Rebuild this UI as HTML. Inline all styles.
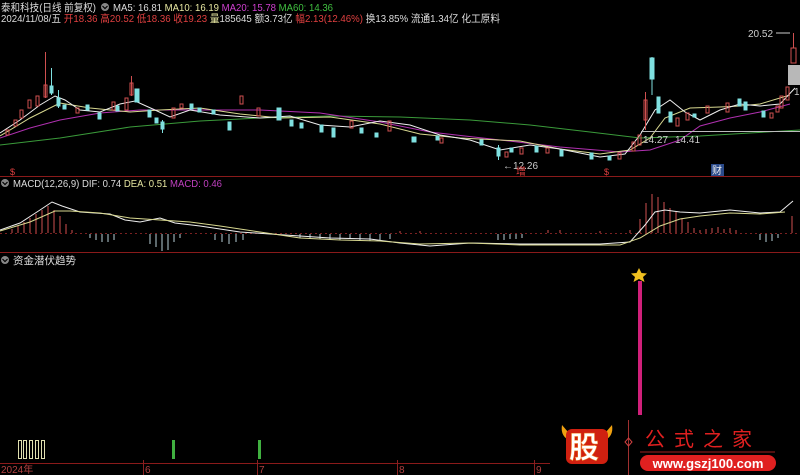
<!DOCTYPE html>
<html><head><meta charset="utf-8"><style>
html,body{margin:0;padding:0;background:#000;width:800px;height:475px;overflow:hidden}
svg{display:block}
text{font-family:"Liberation Sans","Noto Sans CJK SC",sans-serif}
</style></head><body>
<svg width="800" height="475" viewBox="0 0 800 475" xmlns="http://www.w3.org/2000/svg">
<rect width="800" height="475" fill="#000"/>
<!-- header -->
<text x="1" y="11" font-size="10.5" fill="#ddd" textLength="95" lengthAdjust="spacingAndGlyphs">泰和科技(日线 前复权)</text>
<circle cx="105" cy="7" r="4" fill="#888"/><path d="M102.5 6 L105 8.5 L107.5 6" stroke="#000" stroke-width="1.2" fill="none"/>
<text x="113" y="11" font-size="10.5" textLength="220" lengthAdjust="spacingAndGlyphs"><tspan fill="#ddd">MA5: 16.81 </tspan><tspan fill="#e6e6a0">MA10: 16.19 </tspan><tspan fill="#d040d0">MA20: 15.78 </tspan><tspan fill="#40c040">MA60: 14.36</tspan></text>
<text x="1" y="22" font-size="10.5" textLength="499" lengthAdjust="spacingAndGlyphs"><tspan fill="#ddd">2024/11/08/五 </tspan><tspan fill="#e04040">开18.36 高20.52 低18.36 收19.23 </tspan><tspan fill="#e6e6a0">量</tspan><tspan fill="#ddd">185645 额3.73亿 </tspan><tspan fill="#e04040">幅2.13(12.46%) </tspan><tspan fill="#ddd">换13.85% 流通1.34亿 化工原料</tspan></text>

<!-- separators -->
<line x1="0" y1="176.5" x2="800" y2="176.5" stroke="#8a1a1a"/>
<line x1="0" y1="252.5" x2="800" y2="252.5" stroke="#8a1a1a"/>
<line x1="0" y1="463.5" x2="800" y2="463.5" stroke="#8a1a1a"/>

<!-- price MAs -->
<polyline fill="none" stroke="#3a9a3a" stroke-width="1" points="0,145 60,138 130,127 200,121 260,118 330,116 400,117 470,120 530,125 590,132 640,138 700,136 750,133 800,130"/>
<polyline fill="none" stroke="#b030b0" stroke-width="1" points="0,138 30,128 60,120 100,113 140,110 200,110 260,110 320,113 380,122 430,132 500,140 560,147 620,152 650,150 680,140 700,126 730,118 760,112 790,104"/>
<polyline fill="none" stroke="#d8d890" stroke-width="1" points="0,136 30,118 60,103 90,108 130,112 160,110 200,108 240,114 280,118 330,117 380,124 420,134 460,138 520,141 560,149 600,154 630,150 650,138 665,118 690,108 720,107 740,106 760,104 790,95"/>
<polyline fill="none" stroke="#eee" stroke-width="1" points="0,133 20,120 40,105 55,96 65,100 80,110 100,112 120,104 135,101 155,110 170,117 190,110 220,115 260,118 290,116 320,125 350,127 380,121 410,125 440,135 470,140 500,150 530,145 560,149 600,157 625,154 640,135 655,110 670,100 685,112 700,120 720,110 740,104 760,106 780,104 795,88"/>

<!-- candles -->
<g fill="#7fe0e0" stroke="#7fe0e0">
<rect x="50" y="86" width="3" height="7"/><line x1="51.5" y1="68" x2="51.5" y2="95"/>
<rect x="57" y="98" width="3" height="8"/><line x1="58.5" y1="90" x2="58.5" y2="108"/>
<rect x="63" y="105" width="3" height="4"/>
<rect x="86" y="105" width="3" height="5"/>
<rect x="98" y="113" width="3" height="6"/>
<rect x="116" y="106" width="3" height="5"/>
<rect x="135" y="89" width="4" height="13"/>
<rect x="148" y="110" width="3" height="7"/>
<rect x="155" y="118" width="3" height="5"/>
<rect x="161" y="122" width="3" height="7"/><line x1="162.5" y1="120" x2="162.5" y2="133"/>
<rect x="190" y="104" width="3" height="5"/>
<rect x="198" y="108" width="3" height="4"/>
<rect x="212" y="110" width="3" height="4"/>
<rect x="228" y="122" width="3" height="8"/>
<rect x="277" y="108" width="4" height="12"/>
<rect x="290" y="120" width="3" height="6"/>
<rect x="300" y="123" width="3" height="5"/>
<rect x="320" y="125" width="3" height="7"/>
<rect x="332" y="128" width="3" height="9"/>
<rect x="360" y="128" width="3" height="5"/>
<rect x="375" y="133" width="3" height="4"/>
<rect x="412" y="137" width="4" height="5"/>
<rect x="436" y="136" width="3" height="4"/>
<rect x="480" y="140" width="3" height="5"/>
<rect x="497" y="148" width="3" height="8"/><line x1="498.5" y1="145" x2="498.5" y2="160"/>
<rect x="510" y="148" width="3" height="4"/>
<rect x="535" y="146" width="3" height="6"/>
<rect x="560" y="150" width="3" height="6"/>
<rect x="590" y="153" width="3" height="6"/>
<rect x="608" y="156" width="3" height="4"/>
<rect x="650" y="58" width="4" height="21"/><line x1="652" y1="57" x2="652" y2="95"/>
<rect x="657" y="97" width="3" height="16"/>
<rect x="669" y="112" width="3" height="10"/>
<rect x="693" y="114" width="3" height="3"/>
<rect x="738" y="99" width="3" height="7"/>
<rect x="744" y="102" width="3" height="8"/>
<rect x="762" y="111" width="3" height="6"/>
</g>
<g fill="none" stroke="#d05050">
<rect x="44" y="85" width="3" height="12"/><line x1="45.5" y1="52" x2="45.5" y2="98"/>
<rect x="36" y="96" width="3" height="10"/>
<rect x="28" y="100" width="3" height="8"/>
<rect x="20" y="110" width="3" height="8"/>
<rect x="14" y="120" width="3" height="6"/>
<rect x="6" y="130" width="3" height="5"/>
<rect x="76" y="108" width="3" height="5"/>
<rect x="112" y="102" width="3" height="8"/>
<rect x="125" y="98" width="3" height="12"/>
<rect x="130" y="83" width="3" height="12"/><line x1="131.5" y1="76" x2="131.5" y2="96"/>
<rect x="172" y="108" width="3" height="10"/>
<rect x="180" y="104" width="3" height="4"/>
<rect x="240" y="96" width="3" height="8"/>
<rect x="257" y="108" width="3" height="8"/>
<rect x="350" y="121" width="3" height="7"/>
<rect x="388" y="121" width="3" height="10"/>
<rect x="440" y="138" width="3" height="5"/>
<rect x="505" y="152" width="3" height="5"/>
<rect x="520" y="148" width="3" height="6"/>
<rect x="546" y="148" width="3" height="5"/>
<rect x="618" y="153" width="3" height="6"/>
<rect x="632" y="142" width="3" height="9"/>
<rect x="638" y="135" width="3" height="10"/>
<rect x="644" y="100" width="3" height="20"/><line x1="645.5" y1="92" x2="645.5" y2="130"/>
<rect x="676" y="118" width="3" height="8"/>
<rect x="686" y="113" width="3" height="7"/>
<rect x="706" y="106" width="3" height="7"/>
<rect x="726" y="103" width="3" height="9"/>
<rect x="770" y="113" width="3" height="5"/>
<rect x="776" y="106" width="3" height="6"/>
<rect x="780" y="96" width="3" height="12"/>
<rect x="786" y="87" width="3" height="13"/>
<rect x="791" y="48" width="5" height="15"/><line x1="793.5" y1="33" x2="793.5" y2="48"/>
</g>
<rect x="788" y="65" width="12" height="20" fill="#b8b8b8"/>
<line x1="641" y1="131.5" x2="800" y2="131.5" stroke="#bbb"/>
<text x="748" y="37" font-size="10" fill="#ccc">20.52</text><line x1="776" y1="33" x2="790" y2="33" stroke="#ccc"/>
<text x="794" y="95" font-size="10" fill="#ccc">17</text>
<text x="643" y="143" font-size="10" fill="#ccc">14.27</text><text x="675" y="143" font-size="10" fill="#ccc">14.41</text>
<text x="503" y="169" font-size="10" fill="#ccc">←12.26</text>
<text x="516" y="175" font-size="10" fill="#e04040">增</text>
<text x="604" y="175" font-size="9" fill="#e04040">$</text>
<text x="10" y="175" font-size="9" fill="#e04040">$</text>
<rect x="711" y="164" width="13" height="12" fill="#2a4a8a"/><text x="712" y="174" font-size="10" fill="#eee">财</text>

<!-- MACD -->
<circle cx="5" cy="183" r="4" fill="#888"/><path d="M2.5 182 L5 184.5 L7.5 182" stroke="#000" stroke-width="1.2" fill="none"/>
<text x="13" y="187" font-size="10.5" textLength="209" lengthAdjust="spacingAndGlyphs"><tspan fill="#ddd">MACD(12,26,9) DIF: 0.74 </tspan><tspan fill="#e6e6a0">DEA: 0.51 </tspan><tspan fill="#c040c0">MACD: 0.46</tspan></text>
<g stroke="#d05050">
<line x1="12" y1="233" x2="12" y2="229"/><line x1="18" y1="233" x2="18" y2="226"/><line x1="24" y1="233" x2="24" y2="222"/><line x1="30" y1="233" x2="30" y2="218"/><line x1="36" y1="233" x2="36" y2="214"/><line x1="42" y1="233" x2="42" y2="210"/><line x1="48" y1="233" x2="48" y2="206"/><line x1="54" y1="233" x2="54" y2="210"/><line x1="60" y1="233" x2="60" y2="216"/><line x1="66" y1="233" x2="66" y2="224"/><line x1="72" y1="233" x2="72" y2="230"/>
<line x1="640" y1="233" x2="640" y2="219"/><line x1="646" y1="233" x2="646" y2="203"/><line x1="652" y1="233" x2="652" y2="194"/><line x1="658" y1="233" x2="658" y2="197"/><line x1="664" y1="233" x2="664" y2="202"/><line x1="670" y1="233" x2="670" y2="208"/><line x1="676" y1="233" x2="676" y2="212"/><line x1="682" y1="233" x2="682" y2="218"/><line x1="688" y1="233" x2="688" y2="222"/><line x1="694" y1="233" x2="694" y2="228"/><line x1="700" y1="233" x2="700" y2="230"/><line x1="706" y1="233" x2="706" y2="229"/><line x1="712" y1="233" x2="712" y2="228"/><line x1="718" y1="233" x2="718" y2="227"/><line x1="724" y1="233" x2="724" y2="229"/><line x1="730" y1="233" x2="730" y2="228"/><line x1="736" y1="233" x2="736" y2="230"/><line x1="792" y1="233" x2="792" y2="216"/>
<line x1="400" y1="233" x2="400" y2="231"/><line x1="420" y1="233" x2="420" y2="231"/><line x1="548" y1="233" x2="548" y2="230"/><line x1="560" y1="233" x2="560" y2="230"/><line x1="600" y1="233" x2="600" y2="231"/><line x1="630" y1="233" x2="630" y2="230"/>
</g>
<line x1="0" y1="233.5" x2="800" y2="233.5" stroke="#7a2020" stroke-dasharray="2,3"/>
<g stroke="#b8d0d8">
<line x1="90" y1="234" x2="90" y2="238"/><line x1="96" y1="234" x2="96" y2="240"/><line x1="102" y1="234" x2="102" y2="242"/><line x1="108" y1="234" x2="108" y2="242"/><line x1="114" y1="234" x2="114" y2="240"/><line x1="150" y1="234" x2="150" y2="244"/><line x1="156" y1="234" x2="156" y2="247"/><line x1="162" y1="234" x2="162" y2="251"/><line x1="168" y1="234" x2="168" y2="250"/><line x1="174" y1="234" x2="174" y2="242"/><line x1="180" y1="234" x2="180" y2="238"/><line x1="215" y1="234" x2="215" y2="240"/><line x1="222" y1="234" x2="222" y2="242"/><line x1="229" y1="234" x2="229" y2="244"/><line x1="236" y1="234" x2="236" y2="242"/><line x1="243" y1="234" x2="243" y2="240"/>
<line x1="300" y1="234" x2="300" y2="238"/><line x1="310" y1="234" x2="310" y2="239"/><line x1="320" y1="234" x2="320" y2="239"/><line x1="330" y1="234" x2="330" y2="240"/><line x1="340" y1="234" x2="340" y2="240"/><line x1="350" y1="234" x2="350" y2="239"/><line x1="360" y1="234" x2="360" y2="240"/><line x1="370" y1="234" x2="370" y2="241"/><line x1="380" y1="234" x2="380" y2="240"/><line x1="390" y1="234" x2="390" y2="239"/>
<line x1="498" y1="234" x2="498" y2="240"/><line x1="504" y1="234" x2="504" y2="240"/><line x1="510" y1="234" x2="510" y2="239"/><line x1="516" y1="234" x2="516" y2="239"/><line x1="522" y1="234" x2="522" y2="238"/>
<line x1="760" y1="234" x2="760" y2="240"/><line x1="766" y1="234" x2="766" y2="242"/><line x1="772" y1="234" x2="772" y2="241"/><line x1="778" y1="234" x2="778" y2="238"/>
</g>
<polyline fill="none" stroke="#eee" points="0,230 20,223 40,210 52,202 62,206 80,212 110,214 125,220 140,222 160,218 175,223 200,226 240,232 270,234 300,236 330,238 370,239 400,243 430,246 470,243 520,244 560,244 600,244 630,242 645,225 655,212 665,210 680,212 700,213 730,210 760,213 780,212 793,201"/>
<polyline fill="none" stroke="#d8d890" points="0,231 30,222 55,211 70,211 100,213 130,218 160,220 190,222 220,226 260,232 300,238 340,240 380,241 420,244 470,243 520,245 570,245 620,245 640,238 660,226 680,219 700,216 730,213 760,214 785,212"/>

<!-- indicator 3 -->
<circle cx="5" cy="260" r="4" fill="#888"/><path d="M2.5 259 L5 261.5 L7.5 259" stroke="#000" stroke-width="1.2" fill="none"/>
<text x="13" y="264" font-size="10.5" fill="#ddd">资金潜伏趋势</text>
<rect x="638" y="281" width="4" height="134" fill="#d0207a"/>
<polygon points="639,268 641.5,273 647,273.5 643,277 644.5,282 639,279 633.5,282 635,277 631,273.5 636.5,273" fill="#f0c020"/>
<g fill="none" stroke="#e0e0b0"><rect x="18.5" y="440.5" width="3" height="18"/><rect x="23.5" y="440.5" width="3" height="18"/><rect x="29.5" y="440.5" width="3" height="18"/><rect x="35.5" y="440.5" width="3" height="18"/><rect x="41.5" y="440.5" width="3" height="18"/></g>
<rect x="172" y="440" width="3" height="19" fill="#40b040"/>
<rect x="258" y="440" width="3" height="19" fill="#40b040"/>

<!-- axis labels -->
<text x="1" y="473" font-size="10" fill="#b04040">2024年</text>
<line x1="143.5" y1="460" x2="143.5" y2="475" stroke="#8a2020"/><text x="145" y="473" font-size="10" fill="#b04040">6</text>
<line x1="257.5" y1="460" x2="257.5" y2="475" stroke="#8a2020"/><text x="259" y="473" font-size="10" fill="#b04040">7</text>
<line x1="397.5" y1="460" x2="397.5" y2="475" stroke="#8a2020"/><text x="399" y="473" font-size="10" fill="#b04040">8</text>
<line x1="534.5" y1="460" x2="534.5" y2="475" stroke="#8a2020"/><text x="536" y="473" font-size="10" fill="#b04040">9</text>

<!-- logo -->
<rect x="550" y="418" width="250" height="57" fill="#000"/>
<path d="M562 425 Q560 437 571 441 L568 432 Z" fill="#f0a010"/>
<path d="M612 425 Q614 437 603 441 L606 432 Z" fill="#f0a010"/>
<rect x="566" y="429" width="42" height="35" rx="6" fill="#d02010"/>
<text x="569" y="458" font-size="30" font-weight="bold" fill="#fff" stroke="#f08020" stroke-width="0.5">股</text>
<line x1="628.5" y1="420" x2="628.5" y2="475" stroke="#a03030"/>
<polygon points="628.5,438 632,442 628.5,446 625,442" fill="none" stroke="#d04040"/>
<text x="645" y="446" font-size="20" fill="#e02020" letter-spacing="9" font-family="'Noto Serif CJK SC',serif">公式之家</text>
<line x1="640" y1="452" x2="775" y2="452" stroke="#a02020"/>
<rect x="640" y="455" width="136" height="16" rx="8" fill="#e02020"/>
<text x="708" y="468" font-size="13" font-weight="bold" fill="#fff" text-anchor="middle">www.gszj100.com</text>
</svg>
</body></html>
